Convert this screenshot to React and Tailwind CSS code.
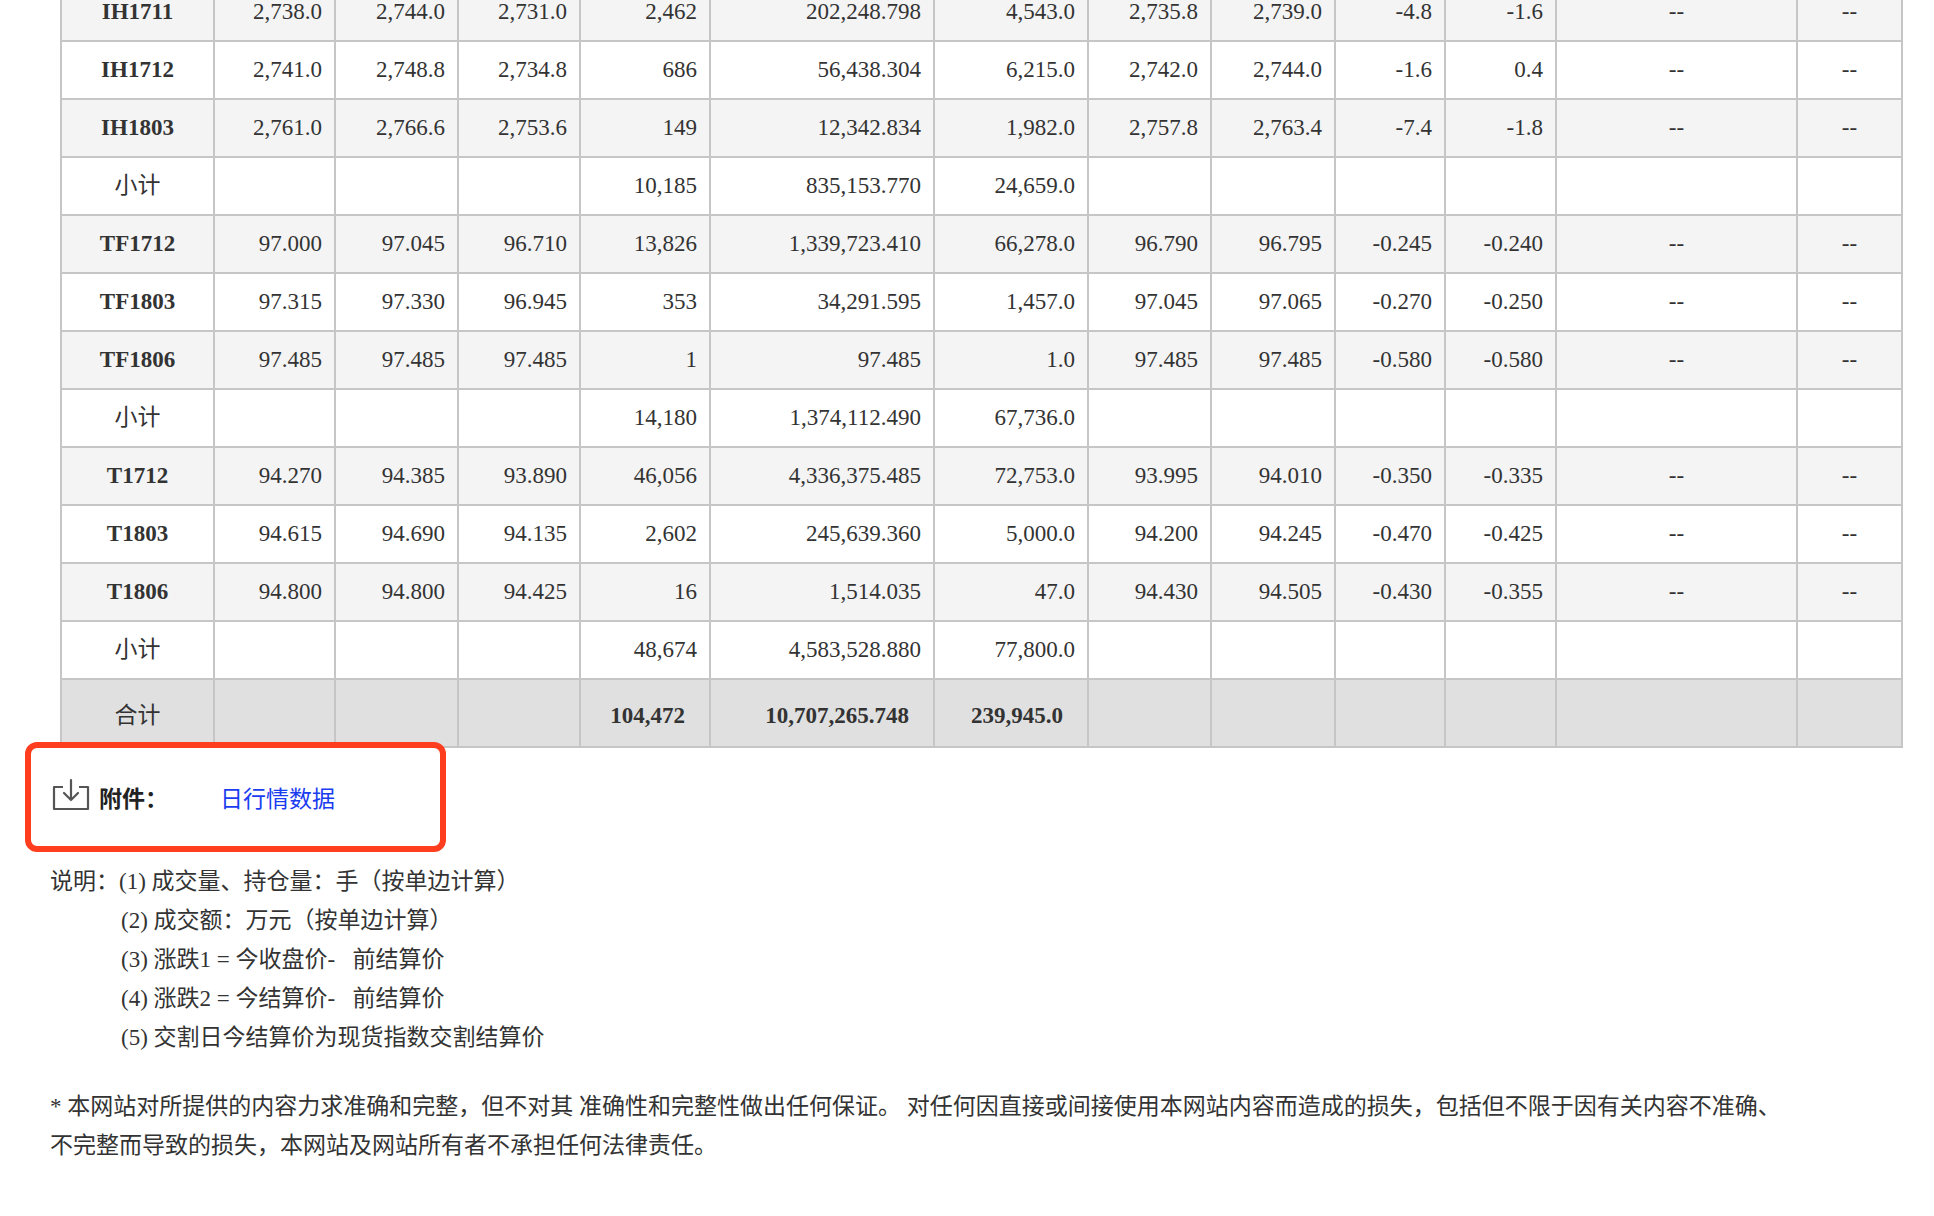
import React from 'react';

const widths = [153, 121, 123, 122, 130, 224, 154, 123, 124, 110, 111, 241, 105];

const rows = [
  ['IH1711', '2,738.0', '2,744.0', '2,731.0', '2,462', '202,248.798', '4,543.0', '2,735.8', '2,739.0', '-4.8', '-1.6', '--', '--'],
  ['IH1712', '2,741.0', '2,748.8', '2,734.8', '686', '56,438.304', '6,215.0', '2,742.0', '2,744.0', '-1.6', '0.4', '--', '--'],
  ['IH1803', '2,761.0', '2,766.6', '2,753.6', '149', '12,342.834', '1,982.0', '2,757.8', '2,763.4', '-7.4', '-1.8', '--', '--'],
  ['小计', '', '', '', '10,185', '835,153.770', '24,659.0', '', '', '', '', '', ''],
  ['TF1712', '97.000', '97.045', '96.710', '13,826', '1,339,723.410', '66,278.0', '96.790', '96.795', '-0.245', '-0.240', '--', '--'],
  ['TF1803', '97.315', '97.330', '96.945', '353', '34,291.595', '1,457.0', '97.045', '97.065', '-0.270', '-0.250', '--', '--'],
  ['TF1806', '97.485', '97.485', '97.485', '1', '97.485', '1.0', '97.485', '97.485', '-0.580', '-0.580', '--', '--'],
  ['小计', '', '', '', '14,180', '1,374,112.490', '67,736.0', '', '', '', '', '', ''],
  ['T1712', '94.270', '94.385', '93.890', '46,056', '4,336,375.485', '72,753.0', '93.995', '94.010', '-0.350', '-0.335', '--', '--'],
  ['T1803', '94.615', '94.690', '94.135', '2,602', '245,639.360', '5,000.0', '94.200', '94.245', '-0.470', '-0.425', '--', '--'],
  ['T1806', '94.800', '94.800', '94.425', '16', '1,514.035', '47.0', '94.430', '94.505', '-0.430', '-0.355', '--', '--'],
  ['小计', '', '', '', '48,674', '4,583,528.880', '77,800.0', '', '', '', '', '', ''],
];

const total = ['合计', '', '', '', '104,472', '10,707,265.748', '239,945.0', '', '', '', '', '', ''];

const notes = [
  '(2) 成交额：万元（按单边计算）',
  '(3) 涨跌1 = 今收盘价-   前结算价',
  '(4) 涨跌2 = 今结算价-   前结算价',
  '(5) 交割日今结算价为现货指数交割结算价',
];

const serif = { fontFamily: '"Liberation Serif", "Noto Sans CJK SC", serif' };

export default function App() {
  return (
    <div className="w-[1934px] h-[1216px] overflow-hidden bg-white text-[#333]" style={serif}>
      <div className="-mt-[18px] pl-[60px]">
        <table className="border-collapse table-fixed w-[1841px] text-[23px]">
          <colgroup>
            {widths.map((w, i) => (
              <col key={i} style={{ width: w }} />
            ))}
          </colgroup>
          <tbody>
            {rows.map((r, ri) => {
              const sub = r[0] === '小计';
              const bg = sub || ri % 4 === 1 ? 'bg-white' : 'bg-[#f4f4f4]';
              return (
                <tr key={ri} className={`h-[58px] ${bg}`}>
                  {r.map((c, ci) => (
                    <td
                      key={ci}
                      className={`border-2 border-[#c6c6c6] p-0 ${
                        ci === 0
                          ? `text-center ${sub ? '' : 'font-bold'}`
                          : ci >= 11
                          ? 'text-center'
                          : 'text-right pr-[12px]'
                      }`}
                    >
                      {c}
                    </td>
                  ))}
                </tr>
              );
            })}
            <tr className="h-[68px] bg-[#e0e0e0]">
              {total.map((c, ci) => (
                <td
                  key={ci}
                  className={`border-2 border-[#c6c6c6] p-0 pt-[6px] ${
                    ci === 0 ? 'text-center' : 'text-right pr-[24px] font-bold'
                  }`}
                >
                  {c}
                </td>
              ))}
            </tr>
          </tbody>
        </table>
      </div>

      <div className="ml-[25px] mt-[-6px] w-[421px] h-[110px] border-[6px] border-[#ff3d1f] rounded-[12px] flex items-center pl-[20px] pt-[6px] text-[23px]">
        <svg width="40" height="34" viewBox="0 0 40 34" fill="none" stroke="#555" strokeWidth="2.2" className="mr-[8px] -mt-[10px]">
          <path d="M12 9H3v22h34V9h-9" strokeLinejoin="round" />
          <path d="M20 2v20M13 15l7 7 7-7" strokeLinecap="round" strokeLinejoin="round" />
        </svg>
        <span className="font-bold text-[#222]">附件：</span>
        <span className="ml-[52px] text-[#1a3cf0]">日行情数据</span>
      </div>

      <div className="ml-[50px] mt-[10px] text-[23px] leading-[39px] text-[#333]">
        <div>说明：(1) 成交量、持仓量：手（按单边计算）</div>
        {notes.map((n) => (
          <div key={n} className="pl-[71px] whitespace-pre">
            {n}
          </div>
        ))}
        <div className="mt-[30px]">
          * 本网站对所提供的内容力求准确和完整，但不对其 准确性和完整性做出任何保证。 对任何因直接或间接使用本网站内容而造成的损失，包括但不限于因有关内容不准确、
          <br />
          不完整而导致的损失，本网站及网站所有者不承担任何法律责任。
        </div>
      </div>
    </div>
  );
}
